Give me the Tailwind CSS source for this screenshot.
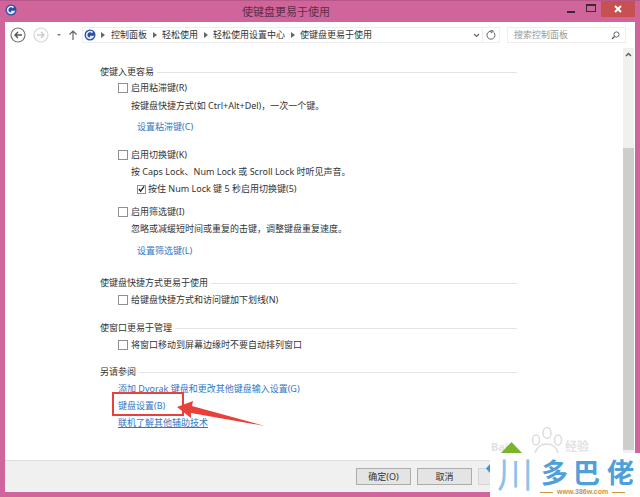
<!DOCTYPE html>
<html lang="zh-CN">
<head>
  <meta charset="UTF-8" />
  <title>使键盘更易于使用</title>
  <script src="https://cdn.jsdelivr.net/npm/@tailwindcss/browser@4"></script>
</head>
<body class="bg-[#d0659b]">
  <div class="relative w-[640px] h-[497px] overflow-hidden flex flex-col bg-[#d0659b] font-['Noto_Sans','Noto_Sans_CJK_SC',sans-serif] text-[9px] text-[#333]">

    <!-- Title bar -->
    <div class="h-[22px] flex border-t border-[#b9578a]">
      <svg class="ml-[5px] mt-[3px] w-[12px] h-[12px]" viewBox="0 0 12 12">
        <circle cx="6" cy="6" r="5.5" fill="#2b4fa8" />
        <path d="M8.5 3.6A3.4 3.4 0 1 0 9 7.6H6" fill="none" stroke="#e4ecf8" stroke-width="1.6" />
      </svg>
      <div class="ml-[225px] mt-[4px] text-[11px] leading-[14px] text-[#5c3049]">使键盘更易于使用</div>
      <div class="ml-auto mr-[5px] flex h-[16px]">
        <div class="w-[20px] flex justify-center"><div class="w-[8px] h-[2px] mt-[10px] bg-[#3a2a33]"></div></div>
        <div class="w-[20px] flex justify-center"><div class="w-[10px] h-[8px] mt-[3px] border border-[#3a2a33] border-t-2"></div></div>
        <div class="w-[34px] h-[16px] bg-[#c75050] flex items-center justify-center">
          <svg class="w-[8px] h-[8px]" viewBox="0 0 8 8"><path d="M1 1l6 6M7 1l-6 6" stroke="#fff" stroke-width="2" /></svg>
        </div>
      </div>
    </div>

    <!-- Window body -->
    <div class="mx-[5px] flex-1 flex flex-col bg-white">

      <!-- Navigation bar -->
      <div class="h-[26px] flex items-center shrink-0">
        <svg class="ml-[5px] w-[16px] h-[16px]" viewBox="0 0 16 16">
          <circle cx="8" cy="8" r="7" fill="none" stroke="#777" stroke-width="1.2" />
          <path d="M12 8H5M8 5L5 8l3 3" fill="none" stroke="#555" stroke-width="1.4" />
        </svg>
        <svg class="ml-[7px] w-[16px] h-[16px]" viewBox="0 0 16 16">
          <circle cx="8" cy="8" r="7" fill="none" stroke="#d5d5d5" stroke-width="1.2" />
          <path d="M4 8h7M8 5l3 3-3 3" fill="none" stroke="#ccc" stroke-width="1.4" />
        </svg>
        <svg class="ml-[7px] w-[6px] h-[4px]" viewBox="0 0 6 4"><path d="M1 1h4L3 3z" fill="#777" /></svg>
        <svg class="ml-[6px] w-[10px] h-[12px]" viewBox="0 0 10 12"><path d="M5 11V2M1.5 5.5L5 2l3.5 3.5" fill="none" stroke="#666" stroke-width="1.2" /></svg>

        <!-- Address box -->
        <div class="ml-[4px] w-[418px] h-[16px] border border-[#eeeeee] flex items-center">
          <svg class="ml-[1px] w-[12px] h-[12px] shrink-0" viewBox="0 0 12 12">
            <circle cx="6" cy="6" r="5.5" fill="#2b4fa8" />
            <path d="M8.5 3.6A3.4 3.4 0 1 0 9 7.6H6" fill="none" stroke="#e4ecf8" stroke-width="1.6" />
          </svg>
          <span class="ml-[5px] w-0 h-0 border-y-[3px] border-y-transparent border-l-[4px] border-l-[#666]"></span>
          <span class="ml-[6px] w-[36px] shrink-0">控制面板</span>
          <span class="ml-[6px] w-0 h-0 border-y-[3px] border-y-transparent border-l-[4px] border-l-[#666]"></span>
          <span class="ml-[5px] w-[36px] shrink-0">轻松使用</span>
          <span class="ml-[6px] w-0 h-0 border-y-[3px] border-y-transparent border-l-[4px] border-l-[#666]"></span>
          <span class="ml-[5px] w-[72px] shrink-0">轻松使用设置中心</span>
          <span class="ml-[6px] w-0 h-0 border-y-[3px] border-y-transparent border-l-[4px] border-l-[#666]"></span>
          <span class="ml-[5px] w-[72px] shrink-0">使键盘更易于使用</span>
          <svg class="ml-auto mr-[2px] w-[7px] h-[5px]" viewBox="0 0 7 5"><path d="M1 1l2.5 2.5L6 1" fill="none" stroke="#666" stroke-width="1.1" /></svg>
          <div class="w-[17px] h-[16px] border-l border-[#eeeeee] flex items-center justify-center">
            <svg class="w-[10px] h-[10px]" viewBox="0 0 10 10"><path d="M7.8 2.4A4 4 0 1 1 5 1.2M5 0v2.6L7.4 1.3z" fill="none" stroke="#666" stroke-width="1" /></svg>
          </div>
        </div>

        <!-- Search box -->
        <div class="ml-[7px] w-[119px] h-[16px] border border-[#eeeeee] flex items-center pl-[6px] text-[#999]">
          <span>搜索控制面板</span>
          <svg class="ml-auto mr-[5px] w-[9px] h-[9px]" viewBox="0 0 9 9"><circle cx="5.5" cy="3.5" r="2.6" fill="none" stroke="#666" /><path d="M3.5 5.5L1 8" stroke="#666" stroke-width="1.4" /></svg>
        </div>
      </div>

      <!-- Content with scrollbar -->
      <div class="h-[412px] flex shrink-0">
        <div class="w-[618px] pl-[95px] pt-[16px]">
          <div class="w-[417px]">
            <div class="h-[16px] flex items-center gap-[3px]"><span>使键入更容易</span><div class="flex-1 h-[1px] bg-[#e2e2e8]"></div></div>
            <div class="h-[16px] flex items-center pl-[18px] gap-[3px]"><div class="w-[10px] h-[10px] border border-[#8f8f8f] bg-white"></div><span>启用粘滞键(R)</span></div>
            <div class="h-[16px] mt-[2px] flex items-center pl-[31px]">按键盘快捷方式(如 Ctrl+Alt+Del)，一次一个键。</div>
            <div class="h-[16px] mt-[5px] flex items-center pl-[37px] text-[#2f78c4]">设置粘滞键(C)</div>

            <div class="h-[16px] mt-[12px] flex items-center pl-[18px] gap-[3px]"><div class="w-[10px] h-[10px] border border-[#8f8f8f] bg-white"></div><span>启用切换键(K)</span></div>
            <div class="h-[16px] mt-[1px] flex items-center pl-[31px]">按 Caps Lock、Num Lock 或 Scroll Lock 时听见声音。</div>
            <div class="h-[16px] mt-[1px] flex items-center pl-[37px] gap-[2px]">
              <div class="w-[9px] h-[9px] border border-[#8f8f8f] bg-white flex items-center justify-center">
                <svg class="w-[8px] h-[8px]" viewBox="0 0 8 8"><path d="M1 4l2 2.5L7 1" fill="none" stroke="#222" stroke-width="1.5" /></svg>
              </div>
              <span>按住 Num Lock 键 5 秒启用切换键(5)</span>
            </div>
            <div class="h-[16px] mt-[7px] flex items-center pl-[18px] gap-[3px]"><div class="w-[10px] h-[10px] border border-[#8f8f8f] bg-white"></div><span>启用筛选键(I)</span></div>
            <div class="h-[16px] mt-[1px] flex items-center pl-[31px]">忽略或减缓短时间或重复的击键，调整键盘重复速度。</div>
            <div class="h-[16px] mt-[6px] flex items-center pl-[37px] text-[#2f78c4]">设置筛选键(L)</div>

            <div class="h-[16px] mt-[16px] flex items-center gap-[3px]"><span>使键盘快捷方式更易于使用</span><div class="flex-1 h-[1px] bg-[#e2e2e8]"></div></div>
            <div class="h-[16px] mt-[1px] flex items-center pl-[18px] gap-[3px]"><div class="w-[10px] h-[10px] border border-[#8f8f8f] bg-white"></div><span>给键盘快捷方式和访问键加下划线(N)</span></div>

            <div class="h-[16px] mt-[12px] flex items-center gap-[3px]"><span>使窗口更易于管理</span><div class="flex-1 h-[1px] bg-[#e2e2e8]"></div></div>
            <div class="h-[16px] mt-[1px] flex items-center pl-[18px] gap-[3px]"><div class="w-[10px] h-[10px] border border-[#8f8f8f] bg-white"></div><span>将窗口移动到屏幕边缘时不要自动排列窗口</span></div>

            <div class="h-[16px] mt-[11px] flex items-center gap-[3px]"><span>另请参阅</span><div class="flex-1 h-[1px] bg-[#e2e2e8]"></div></div>
            <div class="h-[16px] mt-[1px] flex items-center pl-[18px] text-[#2f78c4]">添加 Dvorak 键盘和更改其他键盘输入设置(G)</div>
            <div class="h-[16px] mt-[1px] flex items-center pl-[18px] text-[#2f78c4]">键盘设置(B)</div>
            <div class="h-[16px] mt-[1px] flex items-center pl-[18px] text-[#2f78c4] underline">联机了解其他辅助技术</div>
          </div>
        </div>

        <!-- Scrollbar -->
        <div class="w-[11px] flex flex-col bg-[#f0f0f0]">
          <div class="h-[12px] flex items-center justify-center">
            <svg class="w-[7px] h-[5px]" viewBox="0 0 7 5"><path d="M1 4l2.5-2.5L6 4" fill="none" stroke="#555" stroke-width="1.3" /></svg>
          </div>
          <div class="h-[88px]"></div>
          <div class="h-[302px] bg-[#cdcdcd]"></div>
        </div>
      </div>

      <!-- Button bar -->
      <div class="h-[32px] flex items-center gap-[6px] pl-[351px] bg-[#f0f0f0] border-t border-[#dfdfdf] shrink-0">
        <div class="w-[55px] h-[17px] bg-[#e4e4e4] border border-[#acacac] flex items-center justify-center">确定(O)</div>
        <div class="w-[55px] h-[17px] bg-[#e4e4e4] border border-[#acacac] flex items-center justify-center">取消</div>
        <div class="w-[55px] h-[17px] bg-[#e8e8e8] border border-[#d5d5d5]"></div>
      </div>
    </div>
    <div class="h-[5px] shrink-0"></div>

    <!-- Red highlight box and arrow drawn over the screenshot -->
    <div class="absolute left-[112px] top-[392px] w-[72px] h-[24px] border-2 border-[#e8403a]"></div>
    <svg class="absolute left-[170px] top-[395px] w-[100px] h-[36px]" viewBox="0 0 100 36">
      <path d="M7 12L23 6L22 11L95 31L21 18L21 23Z" fill="#e8403a" />
    </svg>

    <!-- Faint paw watermark -->
    <svg class="absolute left-[527px] top-[427px] w-[40px] h-[26px]" viewBox="0 0 40 26">
      <g fill="none" stroke="#dddddd" stroke-width="1.5">
        <ellipse cx="9" cy="13" rx="3.5" ry="5" />
        <ellipse cx="20" cy="6" rx="4" ry="5.5" />
        <ellipse cx="31" cy="13" rx="3.5" ry="5" />
        <path d="M8 26c2-6 7-9 12-9s10 3 11 9" />
      </g>
    </svg>
    <div class="absolute left-[491px] top-[441px] text-[11px] leading-[12px] font-bold text-[#e2e2e2]">Bai</div>
    <div class="absolute left-[565px] top-[441px] text-[12px] leading-[12px] font-bold text-[#e2e2e2]">经验</div>
    <svg class="absolute left-[500px] top-[442px] w-[23px] h-[12px]" viewBox="0 0 23 12"><path d="M11.500 0L23 12H0z" fill="#7cb32c" /></svg>
    <svg class="absolute left-[486px] top-[464px] w-[5px] h-[9px]" viewBox="0 0 5 9"><path d="M4 0L0 4.500L4 9z" fill="#3f93d2" /></svg>

    <!-- Site logo watermark -->
    <div class="absolute left-[490px] top-[453px] w-[150px] h-[44px] bg-white flex flex-col">
      <div class="mt-[3px] h-[32px] flex items-center text-[#4f9fd8] font-['Noto_Sans_CJK_SC',sans-serif] font-bold text-[27px] leading-[32px]">
        <span class="ml-[2px] w-[46px] text-center text-[36px] font-normal text-[#8cc3ea]">川</span>
        <span class="ml-[3px] w-[28px]">多</span>
        <span class="ml-[4px] w-[30px]">巴</span>
        <span class="ml-[4px] w-[27px]">佬</span>
      </div>
      <div class="pl-[50px] flex items-center gap-[4px] text-[7px] leading-[8px] font-bold text-[#c9963f] font-['Liberation_Sans',sans-serif]">
        <div class="w-[13px] h-[1px] bg-[#c9963f]"></div>
        <span>www.386w.com</span>
        <div class="w-[13px] h-[1px] bg-[#c9963f]"></div>
      </div>
    </div>
  </div>
</body>
</html>
